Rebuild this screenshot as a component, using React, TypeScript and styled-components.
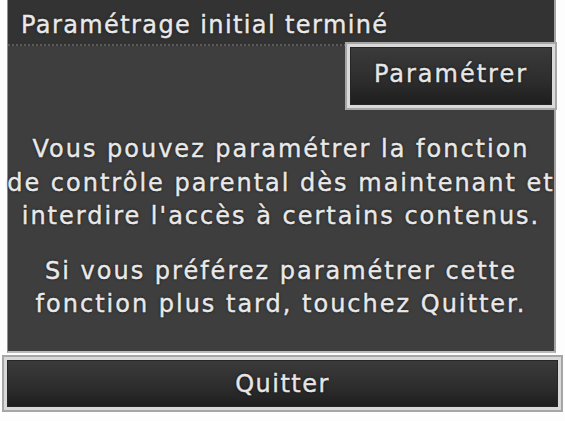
import * as React from "react"
import styled, { createGlobalStyle } from "styled-components"

const GlobalStyle = createGlobalStyle`
  html, body {
    margin: 0;
    padding: 0;
    background: #ffffff;
  }
`

const Screen = styled.div`
  width: 565px;
  height: 421px;
  display: flex;
  flex-direction: column;
  background: #fdfdfd;
  font-family: "DejaVu Sans", "Noto Sans", sans-serif;
  color: #e9e9e9;
  -webkit-text-stroke: 0.4px #e9e9e9;
  overflow: hidden;
`

const Panel = styled.section`
  box-sizing: border-box;
  margin-left: 7px;
  width: 549px;
  height: 353px;
  display: flex;
  flex-direction: column;
  background: #3e3e3e;
  border-left: 1px solid #8f8f8f;
  border-right: 2px solid #a3a3a3;
  border-bottom: 2px solid #b9b9b9;
`

const Header = styled.header`
  box-sizing: border-box;
  height: 46px;
  padding: 10px 0 0 13px;
  background: #333333;
  border-bottom: 2px dotted #5c5c5c;
  font-size: 24px;
  letter-spacing: 1.4px;
  line-height: 30px;
  text-shadow: 0 0 3px #111;
`

const ActionRow = styled.div`
  display: flex;
  justify-content: flex-end;
  margin: -4px -3px 0 0;
  position: relative;
`

const Frame = styled.div<{ $wide?: boolean }>`
  box-sizing: border-box;
  display: flex;
  border: 2px solid #a6a6a6;
  padding: 3px;
  background: #d9d9d9;
  width: ${p => (p.$wide ? "561px" : "212px")};
  height: ${p => (p.$wide ? "57px" : "68px")};
`

const Button = styled.button<{ $spacing: number; $lift: number }>`
  flex: 1;
  box-sizing: border-box;
  border: 1px solid #262626;
  background: linear-gradient(#3a3a3a, #2e2e2e 55%, #1e1e1e);
  color: #e6e6e6;
  -webkit-text-stroke: 0.4px #e6e6e6;
  font-family: inherit;
  font-size: 24px;
  letter-spacing: ${p => p.$spacing}px;
  text-shadow: 0 0 3px #000;
  padding: 0 0 ${p => p.$lift}px;
  cursor: pointer;
`

const Message = styled.div`
  display: flex;
  flex-direction: column;
  gap: 21px;
  margin: 23px -9px 0;
`

const Paragraph = styled.p`
  margin: 0;
  text-align: center;
  white-space: nowrap;
  font-size: 24px;
  letter-spacing: 2px;
  line-height: 33.5px;
  text-shadow: 0 0 3px #111;
`

const Footer = styled.div`
  display: flex;
  margin: 2px 0 0 2px;
`

export default function App() {
  return (
    <Screen>
      <GlobalStyle />
      <Panel>
        <Header>Paramétrage initial terminé</Header>
        <ActionRow>
          <Frame>
            <Button $spacing={2} $lift={5}>Paramétrer</Button>
          </Frame>
        </ActionRow>
        <Message>
          <Paragraph>
            Vous pouvez paramétrer la fonction<br />
            de contrôle parental dès maintenant et<br />
            interdire l'accès à certains contenus.
          </Paragraph>
          <Paragraph>
            Si vous préférez paramétrer cette<br />
            fonction plus tard, touchez Quitter.
          </Paragraph>
        </Message>
      </Panel>
      <Footer>
        <Frame $wide>
          <Button $spacing={1.5} $lift={0}>Quitter</Button>
        </Frame>
      </Footer>
    </Screen>
  )
}
